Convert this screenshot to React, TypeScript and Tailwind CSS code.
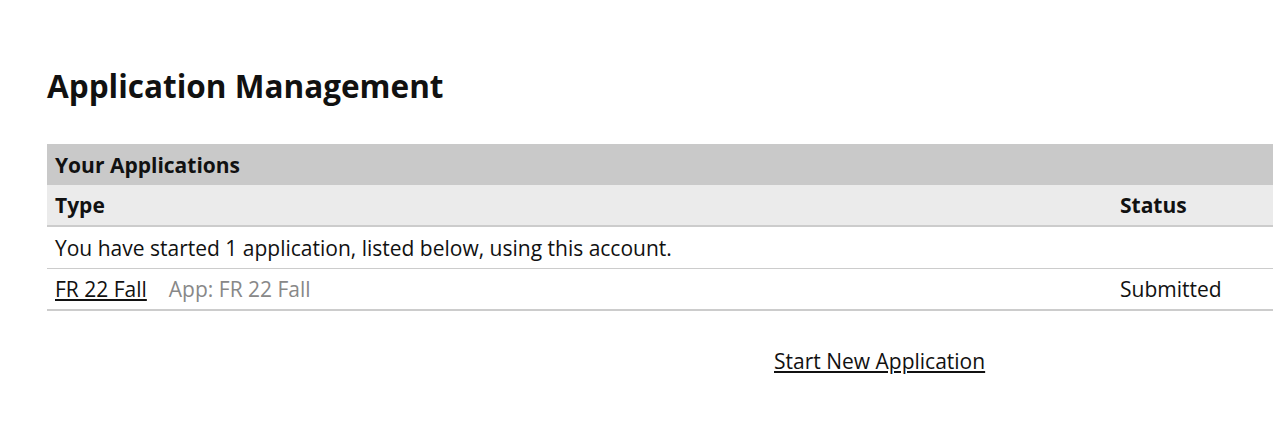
export default function App() {
  return (
    <div className="min-h-[443px] bg-white pl-[47px] pt-[64px] font-['Open_Sans',sans-serif] text-[#111]">
      <h1 className="text-[31.5px] font-bold leading-[44px]">Application Management</h1>
      <div className="mt-[36px] w-[1226px] text-[21px]">
        <div className="flex h-[41px] items-center bg-[#c9c9c9] px-2 pt-[2px] font-bold">Your Applications</div>
        <div className="flex h-[42px] items-center border-b-2 border-[#cccccc] bg-[#ebebeb] px-2 pt-[2px] font-bold">
          <div className="flex-1">Type</div>
          <div className="w-[145px]">Status</div>
        </div>
        <div className="flex h-[42px] items-center border-b border-[#cccccc] px-2 pt-[2px]">
          You have started 1 application, listed below, using this account.
        </div>
        <div className="flex h-[42px] items-center border-b-2 border-[#cccccc] px-2 pt-[2px]">
          <div className="flex flex-1 items-center gap-[22px]">
            <a href="#" className="underline underline-offset-2">FR 22 Fall</a>
            <span className="text-[#888]">App: FR 22 Fall</span>
          </div>
          <div className="w-[145px]">Submitted</div>
        </div>
      </div>
      <div className="mt-[35px] pl-[727px]">
        <a href="#" className="text-[21px] underline underline-offset-2">Start New Application</a>
      </div>
    </div>
  );
}
